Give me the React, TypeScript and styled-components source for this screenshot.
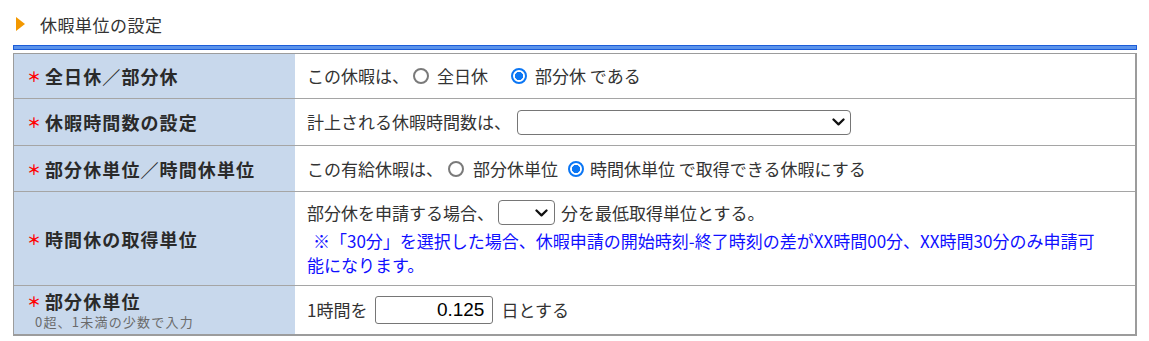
import React from "react";
import styled, { createGlobalStyle } from "styled-components";

const GlobalStyle = createGlobalStyle`
  html, body { margin: 0; padding: 0; background: #fff; }
  body { font-family: "Noto Sans CJK JP", "Noto Sans", sans-serif; }
  * { box-sizing: border-box; }
`;

const Page = styled.div`
  width: 1149px;
  padding: 0 12px 0 13px;
`;

const Header = styled.div`
  display: flex;
  align-items: center;
  height: 45px;
  padding: 3px 0 0 3px;
`;

const Triangle = styled.span`
  width: 0;
  height: 0;
  border-left: 9px solid #f39800;
  border-top: 7px solid transparent;
  border-bottom: 7px solid transparent;
  margin-right: 15px;
`;

const Title = styled.h2`
  margin: 0;
  font-size: 17px;
  font-weight: 400;
  color: #333;
  letter-spacing: 0.5px;
`;

const Bar = styled.div`
  height: 5px;
  border: 1px solid #1c5cd8;
  background: #5b93eb;
  margin-bottom: 3px;
`;

const Table = styled.div`
  border-left: 1px solid #9c9c9c;
  border-top: 1px solid #9c9c9c;
  border-right: 2px solid #9c9c9c;
  border-bottom: 2px solid #9c9c9c;
`;

const Row = styled.div<{ $h: number; $last?: boolean }>`
  display: grid;
  grid-template-columns: 281px 1fr;
  min-height: ${(p) => p.$h + (p.$last ? 0 : 1)}px;
  border-bottom: ${(p) => (p.$last ? "none" : "1px solid #a5a5a5")};
`;

const Label = styled.div`
  background: #c8d8ec;
  display: flex;
  flex-direction: column;
  justify-content: center;
  padding-left: 13px;
`;

const LabelMain = styled.div`
  display: flex;
  align-items: center;
  font-size: 18px;
  font-weight: 700;
  color: #2a2a2a;
  letter-spacing: 1.1px;
  line-height: 22px;
  white-space: nowrap;
`;

const Asterisk = styled.span`
  color: #f00;
  font-size: 14px;
  width: 14px;
  margin-right: 4px;
  text-align: center;
  letter-spacing: 0;
`;

const Sub = styled.div`
  font-size: 13px;
  color: #6a6a6a;
  letter-spacing: 1.2px;
  line-height: 16px;
  padding-left: 8px;
  margin-top: 2px;
`;

const Content = styled.div`
  display: flex;
  flex-direction: column;
  justify-content: center;
  padding-left: 12px;
  font-size: 17px;
  color: #333;
`;

const Line = styled.div<{ $h?: number }>`
  display: flex;
  align-items: center;
  white-space: nowrap;
  line-height: 24px;
  min-height: ${(p) => p.$h ?? 24}px;
`;

const Radio = styled.input<{ $ml: number; $mr: number }>`
  appearance: none;
  -webkit-appearance: none;
  display: block;
  flex: 0 0 16px;
  width: 16px;
  height: 16px;
  border-radius: 50%;
  border: 2px solid #7a7a7a;
  background: #fff;
  margin: 0 ${(p) => p.$mr - 1}px 0 ${(p) => p.$ml}px;
  &:checked {
    border: 2px solid #0b76f4;
    background: radial-gradient(circle, #0b76f4 0 3.8px, #fff 4.4px);
  }
`;

const SelectWrap = styled.span<{ $ml: number; $mr: number }>`
  position: relative;
  display: inline-flex;
  margin: 0 ${(p) => p.$mr}px 0 ${(p) => p.$ml}px;
`;

const Select = styled.select<{ $w: number }>`
  appearance: none;
  width: ${(p) => p.$w}px;
  height: 25px;
  border: 1px solid #767676;
  border-radius: 4px;
  background: #fff;
  font-size: 15px;
  margin: 0;
`;

const Chevron = styled.svg<{ $r: number }>`
  position: absolute;
  right: ${(p) => p.$r}px;
  top: 50%;
  transform: translateY(-50%);
  pointer-events: none;
`;

const Note = styled.div`
  color: #1010ff;
  line-height: 24px;
  white-space: nowrap;
  margin-top: 4px;
`;

const Indent = styled.span`
  padding-left: 6px;
`;

const NumberInput = styled.input`
  width: 118px;
  height: 28px;
  border: 1px solid #767676;
  border-radius: 3px;
  font-family: "Liberation Sans", Arial, sans-serif;
  font-size: 19px;
  color: #000;
  text-align: right;
  padding: 0 8px 0 4px;
  margin: 0 8px;
  background: #fff;
`;

const ChevronIcon = ({ r }: { r: number }) => (
  <Chevron $r={r} width="13" height="8" viewBox="0 0 13 8">
    <path d="M1.5 1.5 L6.5 6.3 L11.5 1.5" stroke="#111" strokeWidth="2.3" fill="none" strokeLinecap="round" strokeLinejoin="round" />
  </Chevron>
);

export default function App() {
  return (
    <Page>
      <GlobalStyle />
      <Header>
        <Triangle />
        <Title>休暇単位の設定</Title>
      </Header>
      <Bar />
      <Table>
        <Row $h={44}>
          <Label>
            <LabelMain>
              <Asterisk>＊</Asterisk>全日休／部分休
            </LabelMain>
          </Label>
          <Content>
            <Line>
              この休暇は、
              <Radio type="radio" name="kind" $ml={4} $mr={9} />
              全日休
              <Radio type="radio" name="kind" defaultChecked $ml={23} $mr={9} />
              部分休 である
            </Line>
          </Content>
        </Row>
        <Row $h={46}>
          <Label>
            <LabelMain>
              <Asterisk>＊</Asterisk>休暇時間数の設定
            </LabelMain>
          </Label>
          <Content>
            <Line>
              計上される休暇時間数は、
              <SelectWrap $ml={6} $mr={0}>
                <Select $w={334}>
                  <option></option>
                </Select>
                <ChevronIcon r={6} />
              </SelectWrap>
            </Line>
          </Content>
        </Row>
        <Row $h={45}>
          <Label>
            <LabelMain>
              <Asterisk>＊</Asterisk>部分休単位／時間休単位
            </LabelMain>
          </Label>
          <Content>
            <Line>
              この有給休暇は、
              <Radio type="radio" name="unit" $ml={5} $mr={10} />
              部分休単位
              <Radio type="radio" name="unit" defaultChecked $ml={10} $mr={7} />
              時間休単位 で取得できる休暇にする
            </Line>
          </Content>
        </Row>
        <Row $h={93}>
          <Label>
            <LabelMain>
              <Asterisk>＊</Asterisk>時間休の取得単位
            </LabelMain>
          </Label>
          <Content>
            <Line $h={25}>
              部分休を申請する場合、
              <SelectWrap $ml={4} $mr={6}>
                <Select $w={57}>
                  <option></option>
                </Select>
                <ChevronIcon r={7} />
              </SelectWrap>
              分を最低取得単位とする。
            </Line>
            <Note>
              <Indent>※「30分」を選択した場合、休暇申請の開始時刻-終了時刻の差がXX時間00分、XX時間30分のみ申請可</Indent>
              <br />
              能になります。
            </Note>
          </Content>
        </Row>
        <Row $h={48} $last>
          <Label>
            <LabelMain>
              <Asterisk>＊</Asterisk>部分休単位
            </LabelMain>
            <Sub>0超、1未満の少数で入力</Sub>
          </Label>
          <Content>
            <Line>
              1時間を
              <NumberInput type="text" defaultValue="0.125" />
              日とする
            </Line>
          </Content>
        </Row>
      </Table>
    </Page>
  );
}
